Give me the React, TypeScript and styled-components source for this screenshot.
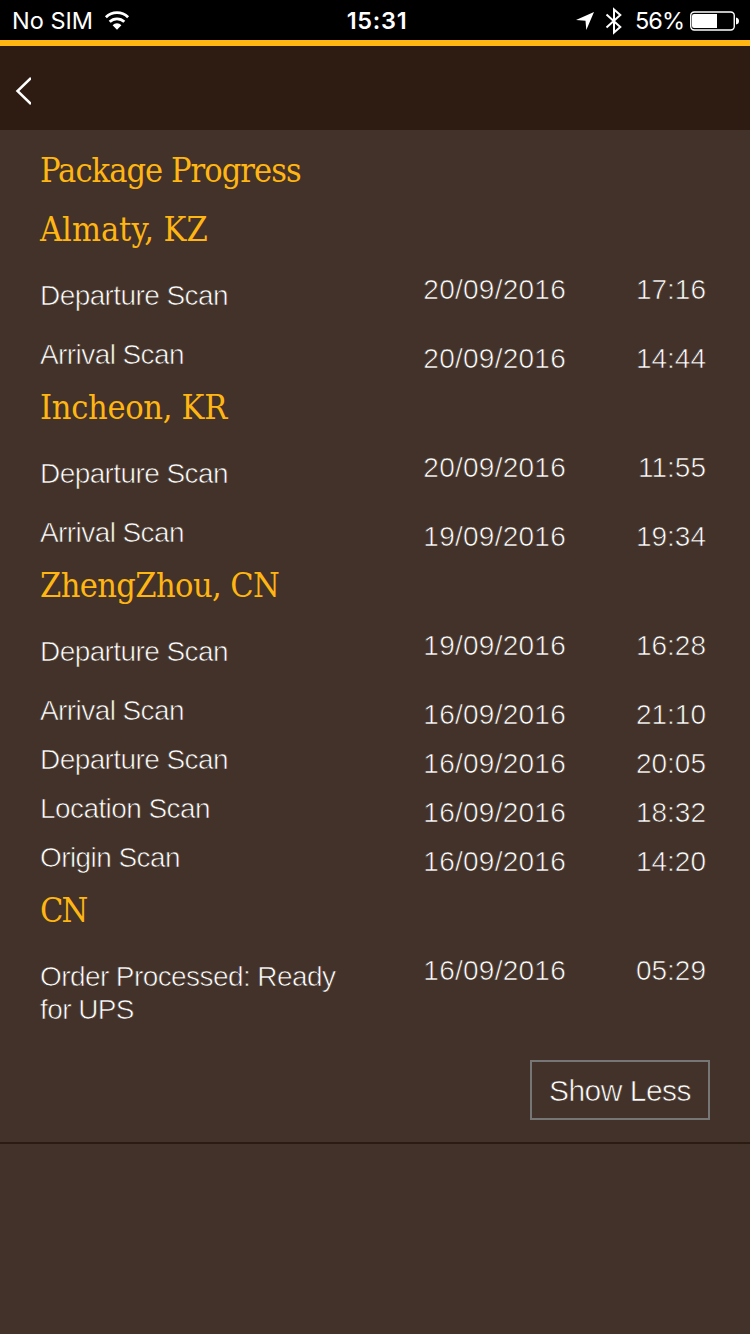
import React from "react";
import styled, { createGlobalStyle } from "styled-components";

const brown = "#433229";
const gold = "#ffb612";

const GlobalStyle = createGlobalStyle`
  * { box-sizing: border-box; }
  html, body { margin: 0; background: ${brown}; }
`;

const Screen = styled.div`
  width: 750px;
  height: 1334px;
  overflow: hidden;
  background: ${brown};
  color: #fff;
  font-family: "Liberation Sans", Arial, sans-serif;
`;

const StatusBar = styled.header`
  height: 40px;
  padding: 1px 11px 0 12px;
  display: grid;
  grid-template-columns: 1fr auto 1fr;
  align-items: center;
  background: #000;
  font: 400 23.5px/39px Inter, sans-serif;
`;

const StatusSide = styled.div<{ $end?: boolean }>`
  display: flex;
  align-items: center;
  justify-content: ${(p) => (p.$end ? "flex-end" : "flex-start")};
`;

const Carrier = styled.span`
  margin-right: 11px;
`;

const Clock = styled.span`
  padding-left: 3px;
  font-weight: 600;
  letter-spacing: 0.7px;
`;

const Indicators = styled.span`
  display: flex;
  align-items: center;
  gap: 10px;
`;

const Percent = styled.span`
  margin: 0 6px 0 12px;
  letter-spacing: -1px;
`;

const NavBar = styled.nav`
  height: 90px;
  padding: 6px 0 0 15px;
  display: flex;
  align-items: center;
  border-top: 6px solid ${gold};
  background: #2e1c12;
`;

const BackButton = styled.button`
  display: flex;
  padding: 0;
  border: 0;
  background: none;
`;

const Panel = styled.main`
  height: 1014px;
  padding: 18px 40px 0;
  border-bottom: 2px solid #2a1c11;
`;

const Heading = styled.h2<{ $title?: boolean; $tracking: number }>`
  height: 50px;
  margin: 0 0 ${(p) => (p.$title ? 9 : 0)}px;
  color: ${gold};
  font-family: "DejaVu Serif Condensed", "DejaVu Serif", serif;
  font-size: 34px;
  font-weight: 400;
  font-stretch: condensed;
  line-height: 44px;
  letter-spacing: ${(p) => p.$tracking}px;
`;

const ScanRow = styled.div<{ $first: boolean }>`
  display: grid;
  grid-template-columns: 327px 199px 140px;
  min-height: ${(p) => (p.$first ? 79 : 49)}px;
  padding-top: ${(p) => (p.$first ? 22 : 2)}px;
  font-size: 28px;
  line-height: 33px;
  -webkit-text-stroke: 0.65px ${brown};
`;

const Label = styled.span`
  letter-spacing: -0.58px;
`;

const Stamp = styled.span<{ $first: boolean }>`
  margin-top: ${(p) => (p.$first ? -6 : 4)}px;
  text-align: right;
  letter-spacing: 0.25px;
`;

const Time = styled(Stamp)`
  letter-spacing: 0;
`;

const Actions = styled.div`
  display: flex;
  justify-content: flex-end;
  padding-top: 34px;
`;

const ShowLess = styled.button`
  width: 180px;
  height: 60px;
  padding: 1px 0 0;
  border: 2px solid #767676;
  background: none;
  color: #fff;
  font: 400 30px/55px "Liberation Sans", Arial, sans-serif;
  letter-spacing: -0.5px;
  -webkit-text-stroke: 0.65px ${brown};
`;

type Scan = [string, string, string];
const places: { name: string; tracking: number; scans: Scan[] }[] = [
  {
    name: "Almaty, KZ",
    tracking: 0,
    scans: [
      ["Departure Scan", "20/09/2016", "17:16"],
      ["Arrival Scan", "20/09/2016", "14:44"],
    ],
  },
  {
    name: "Incheon, KR",
    tracking: -0.3,
    scans: [
      ["Departure Scan", "20/09/2016", "11:55"],
      ["Arrival Scan", "19/09/2016", "19:34"],
    ],
  },
  {
    name: "ZhengZhou, CN",
    tracking: -0.6,
    scans: [
      ["Departure Scan", "19/09/2016", "16:28"],
      ["Arrival Scan", "16/09/2016", "21:10"],
      ["Departure Scan", "16/09/2016", "20:05"],
      ["Location Scan", "16/09/2016", "18:32"],
      ["Origin Scan", "16/09/2016", "14:20"],
    ],
  },
  {
    name: "CN",
    tracking: -2,
    scans: [["Order Processed: Ready for UPS", "16/09/2016", "05:29"]],
  },
];

const WifiIcon = () => (
  <svg width="26" height="20" viewBox="0 0 26 20" fill="none" stroke="#fff" strokeWidth="2.8">
    <path d="M1.9 6.2a16 16 0 0 1 22.2 0" />
    <path d="M5.7 10.8a10.4 10.4 0 0 1 14.6 0" />
    <path d="M8.6 14.2a6.2 6.2 0 0 1 8.8 0L13 18.8z" fill="#fff" stroke="none" />
  </svg>
);

const LocationIcon = () => (
  <svg width="20" height="20" viewBox="0 0 20 20">
    <path d="M19 1 11.3 19 10.5 9.7 1 9z" fill="#fff" />
  </svg>
);

const BluetoothIcon = () => (
  <svg width="18" height="28" viewBox="0 0 18 28" fill="none" stroke="#fff" strokeWidth="2">
    <path d="M1.5 7.5 15.300 20 9 25.500V2.500L15.300 8 1.500 20.500" />
  </svg>
);

const BatteryIcon = () => (
  <svg width="49" height="20" viewBox="0 0 49 20">
    <rect x="0.75" y="1" width="43.5" height="18" rx="3.5" fill="none" stroke="#fff" strokeWidth="1.4" />
    <path d="M4 3h23v14H4a2 2 0 0 1-2-2V5a2 2 0 0 1 2-2z" fill="#fff" />
    <path d="M46 6.500q3 .5 3 3.500t-3 3.500z" fill="#fff" />
  </svg>
);

const BackIcon = () => (
  <svg width="16" height="28" viewBox="0 0 16 28" fill="none" stroke="#fff" strokeWidth="2.5">
    <path d="M16 1 2.500 14 16 27" />
  </svg>
);

export default function App() {
  return (
    <Screen>
      <GlobalStyle />
      <StatusBar>
        <StatusSide>
          <Carrier>No SIM</Carrier>
          <WifiIcon />
        </StatusSide>
        <Clock>15:31</Clock>
        <StatusSide $end>
          <Indicators>
            <LocationIcon />
            <BluetoothIcon />
          </Indicators>
          <Percent>56%</Percent>
          <BatteryIcon />
        </StatusSide>
      </StatusBar>
      <NavBar>
        <BackButton aria-label="Back">
          <BackIcon />
        </BackButton>
      </NavBar>
      <Panel>
        <Heading as="h1" $title $tracking={-0.95}>
          Package Progress
        </Heading>
        {places.map((place) => (
          <section key={place.name}>
            <Heading $tracking={place.tracking}>{place.name}</Heading>
            {place.scans.map(([label, date, time], i) => (
              <ScanRow key={date + time} $first={i === 0}>
                <Label>{label}</Label>
                <Stamp $first={i === 0}>{date}</Stamp>
                <Time $first={i === 0}>{time}</Time>
              </ScanRow>
            ))}
          </section>
        ))}
        <Actions>
          <ShowLess>Show Less</ShowLess>
        </Actions>
      </Panel>
    </Screen>
  );
}
